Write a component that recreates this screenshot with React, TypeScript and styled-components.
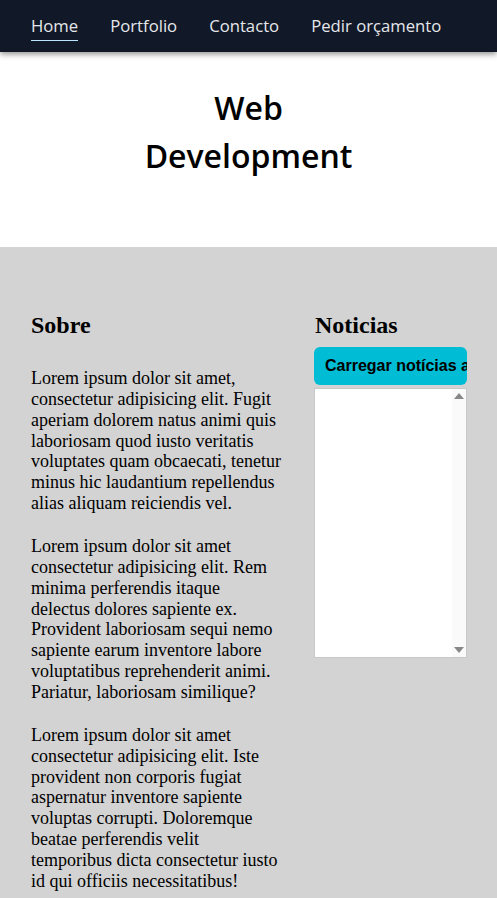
import React from "react";
import styled, { createGlobalStyle } from "styled-components";

const GlobalStyle = createGlobalStyle`
  body {
    margin: 0;
    background: #d3d3d3;
    font-family: "Liberation Serif", "Times New Roman", serif;
  }
`;

const NavBar = styled.nav`
  height: 52px;
  display: flex;
  align-items: center;
  gap: 32px;
  padding: 0 31px;
  background-color: #111827;
  box-shadow: 0 2px 6px rgba(0, 0, 0, 0.45);
  position: relative;
  z-index: 1;
`;

const NavLink = styled.a<{ $active?: boolean }>`
  font-family: "Open Sans", "Noto Sans", sans-serif;
  font-size: 16.7px;
  color: #e5e7eb;
  text-decoration: none;
  padding-top: 3px;
  padding-bottom: 3px;
  border-bottom: 1px solid ${(props) => (props.$active ? "#bae6fd" : "transparent")};
`;

const Hero = styled.header`
  height: 195px;
  box-sizing: border-box;
  padding-top: 32px;
  background: white;
`;

const Title = styled.h1`
  margin: 0 auto;
  max-width: 240px;
  text-align: center;
  font-family: "Open Sans", "Noto Sans", sans-serif;
  font-size: 32px;
  font-weight: 600;
  line-height: 48px;
  color: #000;
`;

const Content = styled.main`
  display: grid;
  grid-template-columns: minmax(0, 252fr) minmax(0, 153fr);
  gap: 31px;
  padding: 65px 30px 0 31px;
  background: #d3d3d3;
`;

const Column = styled.section`
  display: flex;
  flex-direction: column;
  min-width: 0;
`;

const Heading = styled.h2<{ $space: number; $indent?: number }>`
  margin: 0 0 ${(props) => props.$space}px ${(props) => props.$indent || 0}px;
  font-size: 24px;
  font-weight: bold;
`;

const Paragraph = styled.p`
  margin: 0 0 22px;
  font-size: 18px;
  line-height: 20.86px;
`;

const LoadButton = styled.button`
  height: 38px;
  padding: 0 11px;
  border: none;
  border-radius: 6px;
  background: #00bcd4;
  color: #000;
  font-family: "Liberation Sans", Arial, sans-serif;
  font-size: 16px;
  font-weight: bold;
  text-align: left;
  white-space: nowrap;
  overflow: hidden;
`;

const NewsBox = styled.div`
  margin-top: 3px;
  height: 270px;
  box-sizing: border-box;
  display: flex;
  border: 1px solid #c8c8c8;
  background: white;
`;

const NewsList = styled.div`
  flex: 1;
`;

const ScrollRail = styled.div`
  width: 14px;
  display: flex;
  flex-direction: column;
  justify-content: space-between;
  align-items: center;
  padding: 4px 0;
  background: #fafafa;
`;

const Arrow = styled.span<{ $down?: boolean }>`
  width: 0;
  height: 0;
  border-left: 5px solid transparent;
  border-right: 5px solid transparent;
  ${(props) =>
    props.$down
      ? "border-top: 6px solid #888;"
      : "border-bottom: 6px solid #888;"}
`;

const texts = [
  "Lorem ipsum dolor sit amet, consectetur adipisicing elit. Fugit aperiam dolorem natus animi quis laboriosam quod iusto veritatis voluptates quam obcaecati, tenetur minus hic laudantium repellendus alias aliquam reiciendis vel.",
  "Lorem ipsum dolor sit amet consectetur adipisicing elit. Rem minima perferendis itaque delectus dolores sapiente ex. Provident laboriosam sequi nemo sapiente earum inventore labore voluptatibus reprehenderit animi. Pariatur, laboriosam similique?",
  "Lorem ipsum dolor sit amet consectetur adipisicing elit. Iste provident non corporis fugiat aspernatur inventore sapiente voluptas corrupti. Doloremque beatae perferendis velit temporibus dicta consectetur iusto id qui officiis necessitatibus!",
];

function App() {
  return (
    <>
      <GlobalStyle />
      <NavBar>
        <NavLink href="#" $active>Home</NavLink>
        <NavLink href="#">Portfolio</NavLink>
        <NavLink href="#">Contacto</NavLink>
        <NavLink href="#">Pedir orçamento</NavLink>
      </NavBar>
      <Hero>
        <Title>Web Development</Title>
      </Hero>
      <Content>
        <Column>
          <Heading $space={29}>Sobre</Heading>
          {texts.map((t, i) => (
            <Paragraph key={i}>{t}</Paragraph>
          ))}
        </Column>
        <Column>
          <Heading $space={8} $indent={1}>Noticias</Heading>
          <LoadButton>Carregar notícias antigas</LoadButton>
          <NewsBox>
            <NewsList />
            <ScrollRail>
              <Arrow />
              <Arrow $down />
            </ScrollRail>
          </NewsBox>
        </Column>
      </Content>
    </>
  );
}

export default App;
